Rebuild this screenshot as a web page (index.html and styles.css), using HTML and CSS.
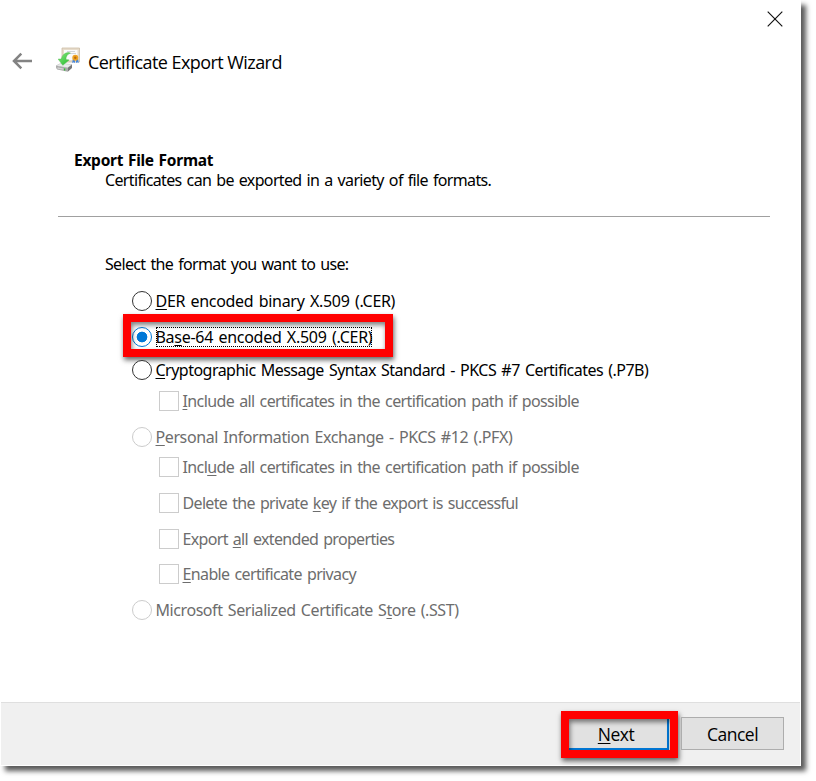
FILE: index.html
```html
<!DOCTYPE html>
<html lang="en">
<head>
<meta charset="utf-8">
<title>Certificate Export Wizard</title>
<link rel="stylesheet" href="styles.css">
</head>
<body>
<main class="window">
  <div class="titlebar">
    <svg class="close" width="16" height="16" viewBox="0 0 16 16"><path d="M.7.7l14.6 14.6M15.3.7L.7 15.3" stroke="#111" stroke-width="1.15" fill="none"/></svg>
  </div>
  <header class="header">
    <svg class="back" width="20" height="18" viewBox="0 0 20 18"><path d="M20 9H2M9.3 1.7L2 9l7.3 7.3" stroke="#838383" stroke-width="2.5" fill="none"/></svg>
    <svg class="logo" width="26" height="26" viewBox="0 0 26 26">
      <defs>
        <linearGradient id="arrow" x1="0" y1="0" x2="1" y2="1"><stop offset="0" stop-color="#8bea80"/><stop offset="1" stop-color="#20b82a"/></linearGradient>
      </defs>
      <path d="M7 1h17.5v14H7z" fill="#e7dccb" stroke="#cdbda5" stroke-width=".8"/>
      <path d="M9 3h13.5v10H9z" fill="#fafafa"/>
      <path d="M12 4.5h8M11 6.5h10" stroke="#c7ccd2" stroke-width=".8"/>
      <path d="M17.8 12l-.6 4 1.5-.8 1.3.8V12zM21 12v4l1.3-.8 1.4.8-.6-4z" fill="#4386df"/>
      <circle cx="20.3" cy="10.7" r="3" fill="#efa321"/><circle cx="20.3" cy="10.7" r="1.2" fill="#b96b10"/>
      <path d="M1 18.8l5-2.6 11 1.4-4.2 3.2z" fill="#e9eceb" stroke="#bbb" stroke-width=".5"/>
      <path d="M1 18.8l11.8 2v4L2.2 22.4Q.7 21.5 1 18.8z" fill="#aaa"/>
      <path d="M12.8 20.8l4.2-3.2v3.5l-4.2 3.7z" fill="#777"/>
      <path d="M2.4 20.3l6 1.1v1.4l-6-1.1z" fill="#d5d5d5"/><path d="M9.6 21.5v2" stroke="#28c32f" stroke-width="1.3"/>
      <path d="M13.5 5.5Q7.5 6 6.3 12.1H3.2l4.6 6.2 6.3-5.4-3.2-.3q0-4.8 4.5-6.5z" fill="url(#arrow)" stroke="#52bd50" stroke-width=".5"/>
    </svg>
    <h1 class="title">Certificate Export Wizard</h1>
  </header>
  <section class="intro">
    <h2 class="heading">Export File Format</h2>
    <p class="description">Certificates can be exported in a variety of file formats.</p>
  </section>
  <section class="content">
    <p class="prompt">Select the format you want to use:</p>
    <div class="options">
      <label class="option"><i class="radio"></i><span class="t-der"><u>D</u>ER encoded binary X.509 (.CER)</span></label>
      <label class="option selected"><i class="radio"></i><span class="t-base">Ba<u>s</u>e-64 encoded X.509 (.CER)</span><b class="marker"></b></label>
      <label class="option"><i class="radio"></i><span class="t-crypto"><u>C</u>ryptographic Message Syntax Standard - PKCS #7 Certificates (.P7B)</span></label>
      <label class="option child disabled"><i class="check"></i><span class="t-include"><u>I</u>nclude all certificates in the certification path if possible</span></label>
      <label class="option disabled"><i class="radio"></i><span class="t-personal"><u>P</u>ersonal Information Exchange - PKCS #12 (.PFX)</span></label>
      <label class="option child disabled"><i class="check"></i><span class="t-include">Incl<u>u</u>de all certificates in the certification path if possible</span></label>
      <label class="option child disabled"><i class="check"></i><span class="t-delete">Delete the private <u>k</u>ey if the export is successful</span></label>
      <label class="option child disabled"><i class="check"></i><span class="t-export">Export <u>a</u>ll extended properties</span></label>
      <label class="option child disabled"><i class="check"></i><span class="t-enable"><u>E</u>nable certificate privacy</span></label>
      <label class="option disabled"><i class="radio"></i><span class="t-sst">Microsoft Serialized Certificate S<u>t</u>ore (.SST)</span></label>
    </div>
  </section>
  <footer class="footer">
    <div class="button next"><span><u>N</u>ext</span><b class="marker"></b></div>
    <div class="button"><span>Cancel</span></div>
  </footer>
</main>
</body>
</html>
```
FILE: styles.css
```css
* { box-sizing: border-box; }
body { margin: 0; height: 781px; overflow: hidden; background: #fff; font: 16px/20px "Noto Sans", sans-serif; color: #000; }
h1, h2, p { margin: 0; font-weight: 400; font-size: inherit; }
.window { width: 801px; height: 766px; display: flex; flex-direction: column; background: #fff; box-shadow: 5px 5px 5px rgba(0, 0, 0, .65); }
.titlebar { height: 42px; display: flex; justify-content: flex-end; padding: 11px 18px 0 0; flex: none; }
.header { height: 40px; display: flex; align-items: center; padding-left: 12px; flex: none; }
.back { margin-right: 23px; margin-top: -3px; }
.logo { margin-top: -5px; }
.title { margin: -1px 0 0 7px; font: 18px/26px "Open Sans", sans-serif; white-space: nowrap; letter-spacing: -.56px; }
.intro { height: 135px; margin: 0 31px 0 58px; padding: 68px 0 0 16px; border-bottom: 1px solid #a0a0a0; flex: none; white-space: nowrap; }
.heading { font-weight: 700; font-size: 15.5px; letter-spacing: -.27px; word-spacing: 1px; }
.description { padding-left: 31px; letter-spacing: -.65px; word-spacing: 1.5px; }
.content { flex: 1; padding: 37px 0 0 105px; white-space: nowrap; }
.prompt { letter-spacing: -.66px; word-spacing: 1.5px; }
.options { display: grid; grid-template-rows: 36px 33px 31px 36px 30px 36px 36px 35px 36px 20px; margin-top: 17px; padding-left: 27px; justify-items: start; align-items: start; }
.option { display: flex; height: 20px; word-spacing: 1.5px; position: relative; }
.t-der { letter-spacing: -.3px; }
.t-base { letter-spacing: -.28px; }
.t-crypto { letter-spacing: -.52px; }
.t-include { letter-spacing: -.61px; }
.t-personal { letter-spacing: -.4px; }
.t-delete { letter-spacing: -.66px; }
.t-export { letter-spacing: -.67px; }
.t-enable { letter-spacing: -.63px; }
.t-sst { letter-spacing: -.43px; }
.child { margin-left: 27px; }
.disabled { color: #6d6d6d; }
.radio, .check { width: 20px; height: 20px; border: 1px solid #333; background: #fff; margin-right: 3.5px; flex: none; }
.radio { border-radius: 50%; }
.disabled .radio, .disabled .check { border-color: #ccc; }
u { text-decoration: underline; text-decoration-thickness: 1px; text-underline-offset: 2px; text-decoration-skip-ink: none; }
.selected .radio { border-color: #0078d7; background: radial-gradient(circle, #0078d7 5px, #fff 5.7px); }
.selected span { outline: 1px dotted #000; outline-offset: -1px; }
.marker { position: absolute; border: 8px solid #f00; box-shadow: 1px 3px 5px rgba(0, 0, 0, .6), inset 1px 3px 5px rgba(0, 0, 0, .5); }
.selected .marker { left: -9px; top: -13px; width: 270px; height: 43px; }
.footer { height: 63px; margin: 0 1px 1px; padding: 14px 16px 0 0; display: flex; justify-content: flex-end; gap: 12px; background: #f0f0f0; border-top: 1px solid #dfdfdf; flex: none; }
.button { width: 103px; height: 33px; display: flex; align-items: center; justify-content: center; background: #e1e1e1; border: 1px solid #adadad; font: 17.5px/24px "Open Sans", sans-serif; letter-spacing: -.5px; position: relative; }
.next { border: 2px solid #0078d7; padding-right: 3px; }
.next .marker { left: -7px; top: -8px; width: 117px; height: 47px; }
```
